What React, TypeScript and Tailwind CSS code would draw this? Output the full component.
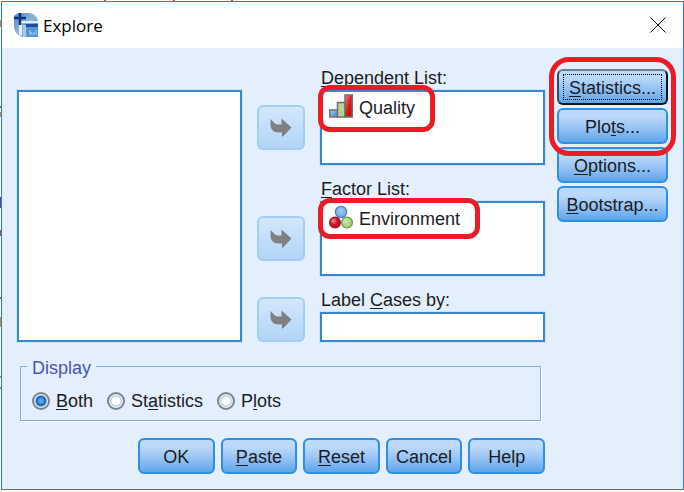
import { useState, type ReactNode } from "react";

const BUTTON =
  "h-9 rounded-md border-2 border-[#2f8fe6] bg-linear-to-b from-[#bcd9fb] from-20% via-[#9fc8f6] via-50% to-[#5da5ea] pt-px text-center leading-5";

const BOX = "border-2 border-[#3a86cf] bg-white outline outline-[#cfe3f7]";

function Mnemonic({ text, at }: { text: string; at: number }) {
  if (at < 0) return <>{text}</>;
  return (
    <>
      {text.slice(0, at)}
      <span className="underline decoration-1 underline-offset-2 [text-decoration-skip-ink:none]">{text[at]}</span>
      {text.slice(at + 1)}
    </>
  );
}

function AppIcon() {
  return (
    <svg className="size-6 shrink-0" viewBox="0 0 24 24" aria-hidden="true">
      <defs>
        <linearGradient id="globe" x1="0" y1="0" x2="1" y2="1">
          <stop offset="0" stopColor="#4f86bf" />
          <stop offset="0.5" stopColor="#8fb6db" />
          <stop offset="1" stopColor="#2f70b4" />
        </linearGradient>
      </defs>
      <path d="M0 3L4 0H14C20 0 24 4 24 10V24H9C4 23 0 19 0 13Z" fill="url(#globe)" />
      <path d="M5 22V8H24V10H8V23Z" fill="#e4eff9" />
      <path d="M9 24V11H24V24Z" fill="#5c97d0" />
      <path d="M9 24V12H12V24Z" fill="#a9c9e8" />
      <path d="M12 11H24V14H12Z" fill="#1f4f9a" />
      <path d="M14 16H24V23H14Z" fill="#4a93dd" />
      <path d="M16 17V22M16 19.500H18V22M20 19V22M22 17V22" stroke="#a9d2f8" fill="none" />
      <path d="M6 0V12M0 5H12" stroke="#0d3486" strokeWidth="2.6" />
    </svg>
  );
}

function OrdinalIcon() {
  return (
    <svg className="size-6 shrink-0" viewBox="0 0 24 24" aria-hidden="true">
      <defs>
        <linearGradient id="barBlue" x1="0" y1="0" x2="1" y2="1">
          <stop offset="0" stopColor="#a9cdf3" />
          <stop offset="1" stopColor="#3f7fcb" />
        </linearGradient>
        <linearGradient id="barRed" x1="0" y1="0" x2="1" y2="1">
          <stop offset="0" stopColor="#ff7a7a" />
          <stop offset="0.5" stopColor="#dd1a1f" />
          <stop offset="1" stopColor="#b80008" />
        </linearGradient>
      </defs>
      <g stroke="#707070" strokeWidth="1.5">
        <rect x="0.75" y="16" width="8" height="7" fill="url(#barBlue)" />
        <rect x="8.5" y="8.5" width="7.5" height="14.5" fill="#b4d692" />
        <rect x="16" y="1" width="7.25" height="22" fill="url(#barRed)" />
      </g>
    </svg>
  );
}

function NominalIcon() {
  return (
    <svg className="size-6 shrink-0" viewBox="0 0 24 24" aria-hidden="true">
      <defs>
        <radialGradient id="ballBlue" cx="0.5" cy="0.4" r="0.6">
          <stop offset="0" stopColor="#a5cbf4" />
          <stop offset="1" stopColor="#6ea6e4" />
        </radialGradient>
        <radialGradient id="ballRed" cx="0.35" cy="0.35" r="0.7">
          <stop offset="0" stopColor="#f48a92" />
          <stop offset="0.5" stopColor="#cf1730" />
          <stop offset="1" stopColor="#b00d26" />
        </radialGradient>
        <radialGradient id="ballGreen" cx="0.4" cy="0.4" r="0.6">
          <stop offset="0" stopColor="#cfe8b0" />
          <stop offset="1" stopColor="#9ccb74" />
        </radialGradient>
      </defs>
      <circle cx="12" cy="7" r="5.6" fill="url(#ballBlue)" stroke="#3f7fc8" strokeWidth="1.2" />
      <circle cx="18" cy="17.5" r="5.4" fill="url(#ballGreen)" stroke="#5f9a3d" strokeWidth="1.2" />
      <circle cx="6" cy="17.5" r="5.4" fill="url(#ballRed)" stroke="#a31029" strokeWidth="1.2" />
    </svg>
  );
}

function MoveButton({ label, className = "" }: { label: string; className?: string }) {
  return (
    <button
      type="button"
      aria-label={label}
      className={`flex h-[45px] w-12 shrink-0 items-center justify-center rounded-md border-2 border-[#a3cdf5] bg-linear-to-b from-[#d3e6fc] to-[#b3d5f7] ${className}`}
    >
      <svg className="h-5 w-6" viewBox="0 0 24 20" aria-hidden="true">
        <path d="M1.500 1L5.500 5C6.500 6 7.500 6.500 9.500 6.500H12.500V0.500L22.500 9.500L14 18.500H13V14.500H9.500C4.500 14.500 1.500 11 1.500 7Z" fill="#808080" />
      </svg>
    </button>
  );
}

function Variable({ icon, name, ring }: { icon: ReactNode; name: string; ring: string }) {
  return (
    <li className="relative flex h-7 w-fit items-center gap-1.5 pl-[7px]">
      {icon}
      <span className="pt-1 leading-5">{name}</span>
      <span className={`pointer-events-none absolute z-10 rounded-xl border-5 border-[#ed1c24] ${ring}`} />
    </li>
  );
}

function ListField({ id, label, children }: { id: string; label: string; children: ReactNode }) {
  return (
    <div className="flex items-end gap-[15px]">
      <MoveButton label={`Move to ${label}`} className="mb-[15px]" />
      <div className="min-w-0 flex-1">
        <div id={id} className="mb-0.5 pl-px leading-5">
          <Mnemonic text={label} at={0} />
        </div>
        <ul aria-labelledby={id} className={`h-[75px] ${BOX}`}>
          {children}
        </ul>
      </div>
    </div>
  );
}

const DISPLAY = [
  { text: "Both", at: 0 },
  { text: "Statistics", at: 2 },
  { text: "Plots", at: 1 },
];

const ACTIONS = [
  { text: "OK", at: -1 },
  { text: "Paste", at: 0 },
  { text: "Reset", at: 0 },
  { text: "Cancel", at: -1 },
  { text: "Help", at: -1 },
];

/* Edges of the document text that show from behind the dialog. */
function Behind() {
  return (
    <svg className="pointer-events-none absolute top-0 left-0 h-[492px] w-[300px]" viewBox="0 0 300 492" aria-hidden="true">
      <g fill="#b5533c">
        <rect x="104" width="2" height="1" />
        <rect x="173" width="2" height="1" />
        <rect x="231" width="2" height="1" />
        <rect y="106" width="1" height="2" />
        <rect y="230" width="1" height="6" />
        <rect y="297" width="1" height="2" />
      </g>
      <g fill="#d08a2c">
        <rect y="20" width="1" height="7" />
        <rect y="112" width="1" height="5" />
        <rect y="317" width="1" height="10" />
        <rect y="376" width="1" height="2" />
        <rect y="387" width="1" height="2" />
      </g>
      <rect y="197" width="1" height="11" fill="#5a4a9c" />
    </svg>
  );
}

export default function App() {
  const [display, setDisplay] = useState("Both");
  return (
    <div className="relative min-h-screen bg-white pt-px pl-px font-['Liberation_Sans',Arial,sans-serif] text-[18px] text-[#1c1c24]">
      <Behind />
      <main className="border border-[#2a7fc4] bg-[#e3effc]">
        <header className="flex h-[46px] items-center justify-between bg-white pr-4 pl-3">
          <h1 className="flex items-center gap-[5px] font-['Open_Sans',sans-serif] text-[17px] leading-6 text-black">
            <AppIcon />
            <span className="pt-px">Explore</span>
          </h1>
          <button type="button" aria-label="Close" className="p-px">
            <svg className="size-4" viewBox="0 0 16 16" aria-hidden="true">
              <path d="M0.500 0.500L15.500 15.500M15.500 0.500L0.500 15.500" stroke="#000" strokeWidth="1" />
            </svg>
          </button>
        </header>

        <div className="flex gap-3 px-[15px] pt-5 pb-[15px]">
          <div className="min-w-0 flex-1">
            <div className="flex gap-[15px]">
              <div className="min-w-0 flex-1 pt-[22px]">
                <ul aria-label="Variables" className={`h-full ${BOX}`} />
              </div>
              <div className="flex w-[288px] flex-col gap-3.5">
                <ListField id="dependent" label="Dependent List:">
                  <Variable icon={<OrdinalIcon />} name="Quality" ring="-top-[7px] -right-5 -bottom-3 -left-1" />
                </ListField>
                <ListField id="factor" label="Factor List:">
                  <Variable icon={<NominalIcon />} name="Environment" ring="-top-[5px] -right-5 -bottom-2 -left-1" />
                </ListField>
                <div className="flex items-end gap-[15px]">
                  <MoveButton label="Move to Label Cases by" />
                  <div className="min-w-0 flex-1">
                    <label htmlFor="cases" className="mb-0.5 block pl-px leading-5">
                      <Mnemonic text="Label Cases by:" at={6} />
                    </label>
                    <input id="cases" type="text" className={`block h-[30px] w-full px-1 ${BOX}`} />
                  </div>
                </div>
              </div>
            </div>

            <fieldset className="mt-3 mr-1 ml-[3px] border border-[#7fb0e0] pr-3 pb-[9px] pl-[11px] shadow-[1px_1px_0_#fff]">
              <legend className="-ml-[5px] px-[5px] pt-1 leading-5 text-[#4a55b0]">Display</legend>
              <div className="flex gap-3.5 pt-[13px]">
                {DISPLAY.map(({ text, at }) => (
                  <label key={text} className="flex items-center gap-1.5 leading-5">
                    <input
                      type="radio"
                      name="display"
                      checked={display === text}
                      onChange={() => setDisplay(text)}
                      className="size-[18px] appearance-none rounded-full border-2 border-[#808486] bg-[radial-gradient(circle,#fff_0_4px,#a9cbe8_5px,#e4eef2_6px)] checked:bg-[radial-gradient(circle,#5aa5ea_0_2px,#1565c0_4px,#2a78cc_5px,#dfe9ec_6px)]"
                    />
                    <span>
                      <Mnemonic text={text} at={at} />
                    </span>
                  </label>
                ))}
              </div>
            </fieldset>

            <div className="mt-[17px] ml-auto flex w-[407px] gap-1.5">
              {ACTIONS.map(({ text, at }) => (
                <button key={text} type="button" className={`flex-1 ${BUTTON}`}>
                  <Mnemonic text={text} at={at} />
                </button>
              ))}
            </div>
          </div>

          <nav aria-label="Explore settings" className="flex w-[111px] flex-col gap-[3px] pt-px">
            <div className="relative flex flex-col gap-[3px]">
              <button
                type="button"
                className="h-9 rounded-md border-2 border-t-[#6f7f92] border-r-[#10161e] border-b-[#10161e] border-l-[#3c4856] bg-linear-to-b from-[#bcd9fb] from-20% to-[#5da5ea] px-1 py-[3px] leading-5"
              >
                <span className="flex h-full items-center justify-center border border-dotted border-black pt-px">
                  <span>
                    <Mnemonic text="Statistics..." at={0} />
                  </span>
                </span>
              </button>
              <button type="button" className={BUTTON}>
                <Mnemonic text="Plots..." at={3} />
              </button>
              <span className="pointer-events-none absolute -inset-x-2 -inset-y-3 z-10 rounded-[20px] border-5 border-[#ed1c24]" />
            </div>
            <button type="button" className={BUTTON}>
              <Mnemonic text="Options..." at={0} />
            </button>
            <button type="button" className={BUTTON}>
              <Mnemonic text="Bootstrap..." at={0} />
            </button>
          </nav>
        </div>
      </main>
    </div>
  );
}
